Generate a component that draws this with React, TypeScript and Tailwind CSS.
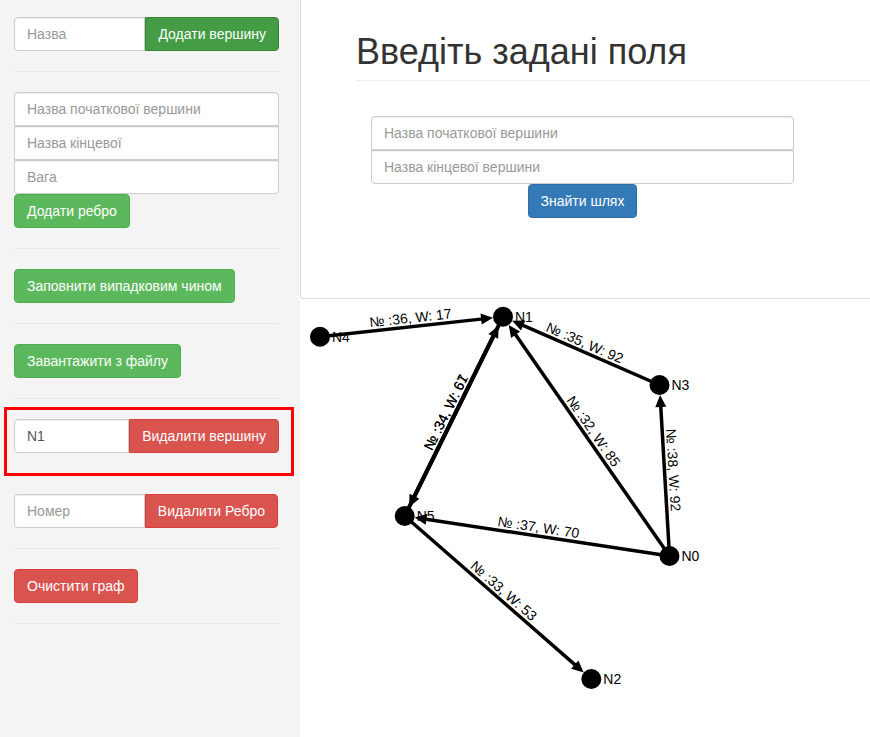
import React from 'react';

type Pt = [number, number];

const nodes: Record<string, Pt> = {
  N0: [669.5, 556],
  N1: [503, 316.7],
  N2: [591.3, 679],
  N3: [659.5, 385],
  N4: [320, 336.7],
  N5: [404.7, 516],
};

const edges: { from: string; to: string; label: string; w?: number }[] = [
  { from: 'N4', to: 'N1', label: '№ :36, W: 17' },
  { from: 'N3', to: 'N1', label: '№ :35, W: 92' },
  { from: 'N0', to: 'N1', label: '№ :32, W: 85' },
  { from: 'N0', to: 'N3', label: '№ :38, W: 92' },
  { from: 'N0', to: 'N5', label: '№ :37, W: 70' },
  { from: 'N5', to: 'N2', label: '№ :33, W: 53' },
  { from: 'N5', to: 'N1', label: '№ :34, W: 67', w: 4 },
  { from: 'N1', to: 'N5', label: '№ :34, W: 61', w: 4 },
];

const R = 10;

const Edge: React.FC<{ from: string; to: string; label: string; w?: number }> = ({ from, to, label, w = 3.5 }) => {
  const [x1, y1] = nodes[from];
  const [x2, y2] = nodes[to];
  const dx = x2 - x1;
  const dy = y2 - y1;
  const len = Math.hypot(dx, dy);
  const ux = dx / len;
  const uy = dy / len;
  // arrow tip sits on the circle edge
  const tx = x2 - ux * R;
  const ty = y2 - uy * R;
  const bx = tx - ux * 12;
  const by = ty - uy * 12;
  const px = -uy * 5.5;
  const py = ux * 5.5;
  let a = (Math.atan2(dy, dx) * 180) / Math.PI;
  if (a > 90) a -= 180;
  if (a < -90) a += 180;
  const mx = (x1 + x2) / 2;
  const my = (y1 + y2) / 2;
  return (
    <g>
      <line x1={x1} y1={y1} x2={bx + ux * 2} y2={by + uy * 2} stroke="#000" strokeWidth={w} />
      <polygon points={`${tx},${ty} ${bx + px},${by + py} ${bx - px},${by - py}`} fill="#000" />
      <text
        x={mx}
        y={my}
        dy={-4}
        textAnchor="middle"
        transform={`rotate(${a} ${mx} ${my})`}
        fontSize={14}
        fill="#000"
      >
        {label}
      </text>
    </g>
  );
};

const Graph: React.FC = () => (
  <svg width={570} height={438} viewBox="300 299 570 438" className="block font-['Liberation_Sans',Arial,sans-serif]">
    {Object.entries(nodes).map(([id, [x, y]]) => (
      <g key={id}>
        <circle cx={x} cy={y} r={R} fill="#000" />
        <text x={x + 12} y={y + 5} fontSize={14} fill="#000">
          {id}
        </text>
      </g>
    ))}
    {edges.map((e, i) => (
      <Edge key={i} {...e} />
    ))}
  </svg>
);

const inputCls =
  'h-[34px] w-full min-w-0 border border-[#ccc] bg-white px-[12px] text-[14px] text-[#555] placeholder:text-[#999] shadow-[inset_0_1px_1px_rgba(0,0,0,0.075)] outline-none';

const btn = 'h-[34px] shrink-0 border px-[12px] text-[14px] leading-[20px] text-white whitespace-nowrap';

const Divider = () => <hr className="my-[20px] border-t border-[#e8e8e8]" />;

export default function App() {
  return (
    <div className="flex h-[737px] overflow-hidden bg-white font-['Liberation_Sans',Arial,sans-serif] text-[14px] text-[#333]">
      {/* Sidebar */}
      <aside className="w-[300px] shrink-0 bg-[#f4f4f4] pl-[14px] pr-[21px] pt-[17px]">
        <div className="flex">
          <input className={`${inputCls} rounded-l-[4px]`} placeholder="Назва" />
          <button className={`${btn} rounded-r-[4px] bg-[#449d44] border-[#398439]`}>Додати вершину</button>
        </div>
        <Divider />

        <div className="flex flex-col">
          <input className={`${inputCls} rounded-t-[4px]`} placeholder="Назва початкової вершини" />
          <input className={inputCls} placeholder="Назва кінцевої" />
          <input className={`${inputCls} rounded-b-[4px]`} placeholder="Вага" />
          <button className={`${btn} w-fit rounded-[4px] bg-[#5cb85c] border-[#4cae4c]`}>Додати ребро</button>
        </div>
        <Divider />

        <button className={`${btn} rounded-[4px] bg-[#5cb85c] border-[#4cae4c]`}>Заповнити випадковим чином</button>
        <Divider />

        <button className={`${btn} rounded-[4px] bg-[#5cb85c] border-[#4cae4c]`}>Завантажити з файлу</button>
        <Divider />

        <div className="relative flex">
          <input className={`${inputCls} rounded-l-[4px]`} value="N1" readOnly />
          <button className={`${btn} rounded-r-[4px] bg-[#d9534f] border-[#d43f3a]`}>Видалити вершину</button>
          {/* highlight frame */}
          <div className="pointer-events-none absolute -left-[10px] -top-[12px] -right-[15px] -bottom-[23px] border-[3px] border-[#ff0000]" />
        </div>
        <Divider />

        <div className="flex pr-[1px]">
          <input className={`${inputCls} rounded-l-[4px]`} placeholder="Номер" />
          <button className={`${btn} rounded-r-[4px] bg-[#d9534f] border-[#d43f3a]`}>Видалити Ребро</button>
        </div>
        <Divider />

        <button className={`${btn} rounded-[4px] bg-[#d9534f] border-[#d43f3a]`}>Очистити граф</button>
        <Divider />
      </aside>

      {/* Main */}
      <main className="flex min-w-0 flex-1 flex-col">
        <div className="h-[299px] shrink-0 rounded-bl-[4px] border-b border-l border-[#ddd] pl-[55px] pt-[32px]">
          <h1 className="border-b border-[#eee] pb-[9px] text-[36px] leading-[39px] font-normal text-[#333]">
            Введіть задані поля
          </h1>
          <div className="ml-[15px] mt-[35px] flex w-[423px] flex-col">
            <input className={`${inputCls} rounded-t-[4px]`} placeholder="Назва початкової вершини" />
            <input className={`${inputCls} rounded-b-[4px]`} placeholder="Назва кінцевої вершини" />
            <button className={`${btn} self-center rounded-[4px] bg-[#337ab7] border-[#2e6da4]`}>Знайти шлях</button>
          </div>
        </div>
        <Graph />
      </main>
    </div>
  );
}
